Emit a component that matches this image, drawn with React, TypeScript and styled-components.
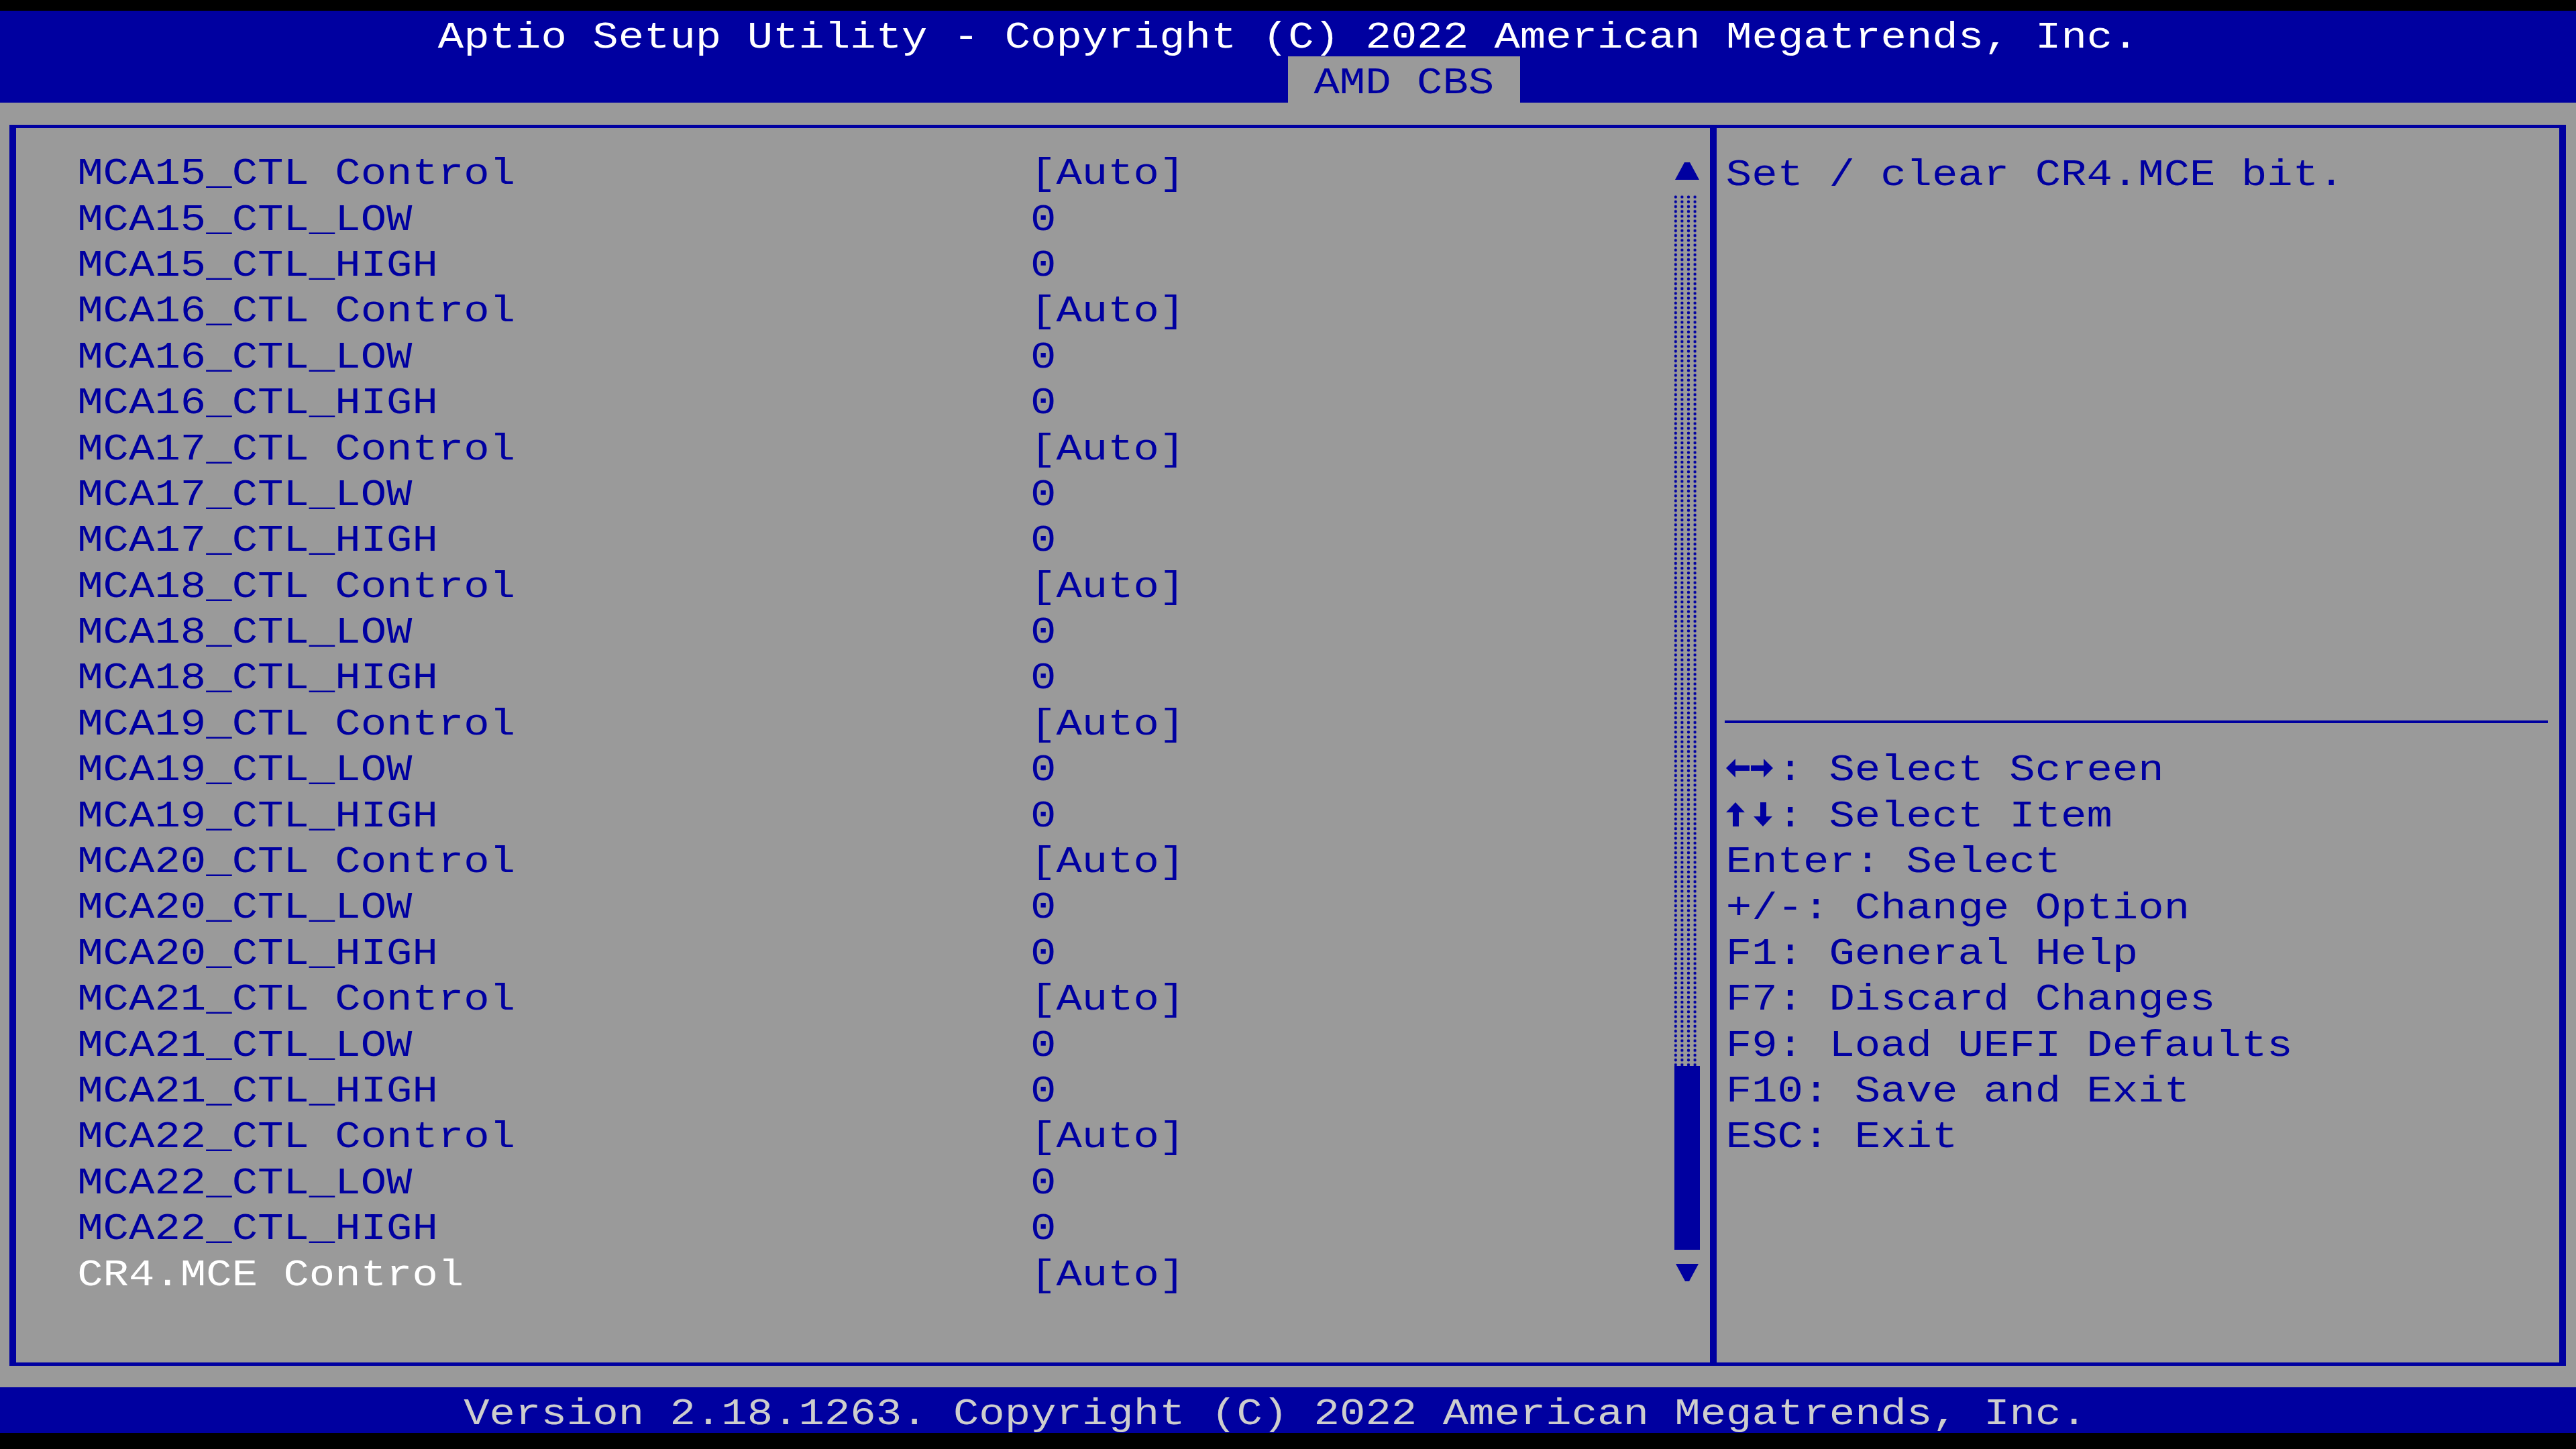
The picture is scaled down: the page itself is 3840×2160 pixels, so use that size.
import React from "react";
import styled, { createGlobalStyle } from "styled-components";

/* Text-mode metrics: 100 columns x 31 rows on a 3840x2160 screen */
const CW = 38.4;
const RH = 68.4;
const BLUE = "#0000a0";
const GRAY = "#9a9a9a";

const Global = createGlobalStyle`
  html, body {
    margin: 0;
    padding: 0;
    background: #000;
  }
  body {
    width: 3840px;
    height: 2160px;
    overflow: hidden;
  }
`;

const Screen = styled.div`
  width: 3840px;
  height: 2160px;
  box-sizing: border-box;
  padding-top: 16px;
  background: #000;
  display: flex;
  flex-direction: column;
  font-family: "Liberation Mono", "DejaVu Sans Mono", monospace;
  font-size: 64px;
`;

type Tone = "blue" | "white" | "dim";

const toneColor: Record<Tone, string> = {
  blue: BLUE,
  white: "#ffffff",
  dim: "#cdcdcd",
};

/* One run of characters, squeezed vertically to the console cell shape */
const Glyphs = styled.span<{ $tone: Tone }>`
  display: inline-block;
  height: ${RH}px;
  line-height: ${RH}px;
  white-space: pre;
  color: ${(p) => toneColor[p.$tone]};
  transform: scaleY(0.88);
  transform-origin: 0 100%;
`;

const Header = styled.header`
  background: ${BLUE};
  height: ${RH * 2}px;
  display: flex;
  flex-direction: column;
`;

const TitleRow = styled.div`
  height: ${RH}px;
  padding-left: ${CW * 17}px;
`;

const TabRow = styled.div`
  height: ${RH}px;
  padding-left: ${CW * 50}px;
`;

const Tab = styled.div`
  width: ${CW * 9}px;
  height: ${RH}px;
  box-sizing: border-box;
  padding-left: ${CW}px;
  background: ${GRAY};
`;

const Workspace = styled.main`
  height: ${RH * 28}px;
  box-sizing: border-box;
  background: ${GRAY};
  padding: 33.2px 0 32px 13.5px;
  display: flex;
  flex-direction: column;
`;

const Frame = styled.section`
  flex: 1;
  width: 3811.5px;
  box-sizing: border-box;
  border-style: solid;
  border-color: ${BLUE};
  border-width: 5px 10px;
  display: flex;
`;

const ListPanel = styled.div`
  width: 2472.5px;
  flex: none;
  box-sizing: border-box;
  padding: 30.2px 0 0 91.7px;
  display: flex;
  flex-direction: column;
`;

const SettingRow = styled.div`
  height: ${RH}px;
  display: grid;
  grid-template-columns: ${CW * 37}px auto;
`;

const ScrollRail = styled.div`
  width: ${CW}px;
  flex: none;
  padding-top: 30.2px;
  display: flex;
  flex-direction: column;
`;

const ArrowCell = styled.div`
  height: ${RH}px;
  display: flex;
  align-items: center;
  justify-content: center;
`;

const Track = styled.div<{ $rows: number }>`
  height: ${(p) => p.$rows * RH}px;
  background-image: radial-gradient(
    circle at center,
    ${BLUE} 0 1.9px,
    transparent 2.5px
  );
  background-size: 9.6px 7.2px;
  background-position: -3px 0;
  margin-right: 2px;
`;

const Thumb = styled.div<{ $rows: number }>`
  height: ${(p) => p.$rows * RH}px;
  background: ${BLUE};
`;

const HelpPanel = styled.aside`
  flex: 1;
  margin-left: 14.2px;
  border-left: 10px solid ${BLUE};
  box-sizing: border-box;
  padding: 30.2px 17px 0 14.2px;
  display: flex;
  flex-direction: column;
`;

const Description = styled.div`
  height: ${RH * 12}px;
`;

const Rule = styled.div`
  height: ${RH}px;
  display: flex;
  align-items: center;
  margin-left: -2px;

  &::before {
    content: "";
    flex: 1;
    height: 4px;
    background: ${BLUE};
  }
`;

const KeyRow = styled.div`
  height: ${RH}px;
  display: flex;
`;

const ArrowPair = styled.svg`
  flex: none;
  width: ${CW * 2}px;
  height: ${RH}px;
`;

const Footer = styled.footer`
  height: ${RH}px;
  background: ${BLUE};
  padding-left: ${CW * 18}px;
`;

const UpArrow = () => (
  <svg width="36" height="26" viewBox="0 0 36 26">
    <polygon points="14,0 22,0 36,26 0,26" fill={BLUE} />
  </svg>
);

const DownArrow = () => (
  <svg width="34" height="26" viewBox="0 0 34 26">
    <polygon points="0,0 34,0 20,26 14,26" fill={BLUE} />
  </svg>
);

/* The heavy console arrows used in the key legend: left/right or up/down */
const KeyArrows = ({ axis }: { axis: "x" | "y" }) => (
  <ArrowPair viewBox={`0 0 ${CW * 2} ${RH}`}>
    {axis === "x" ? (
      <g fill={BLUE}>
        <polygon points="0,35 14,21 14,49" />
        <rect x="13" y="31" width="22" height="8" />
        <rect x="37" y="31" width="20" height="8" />
        <polygon points="56,21 70,35 56,49" />
      </g>
    ) : (
      <g fill={BLUE}>
        <polygon points="14,17 28,32 0,32" />
        <rect x="10" y="31" width="9" height="22" />
        <rect x="51" y="17" width="9" height="22" />
        <polygon points="41,38 69,38 55,53" />
      </g>
    )}
  </ArrowPair>
);

type Setting = { label: string; value: string; selected?: boolean };

const settings: Setting[] = [];
for (let n = 15; n <= 22; n++) {
  settings.push({ label: `MCA${n}_CTL Control`, value: "[Auto]" });
  settings.push({ label: `MCA${n}_CTL_LOW`, value: "0" });
  settings.push({ label: `MCA${n}_CTL_HIGH`, value: "0" });
}
settings.push({ label: "CR4.MCE Control", value: "[Auto]", selected: true });

type HelpKey = { key: string; action: string; axis?: "x" | "y" };

const keys: HelpKey[] = [
  { key: "\u2190\u2192", action: ": Select Screen", axis: "x" },
  { key: "\u2191\u2193", action: ": Select Item", axis: "y" },
  { key: "Enter", action: ": Select" },
  { key: "+/-", action: ": Change Option" },
  { key: "F1", action: ": General Help" },
  { key: "F7", action: ": Discard Changes" },
  { key: "F9", action: ": Load UEFI Defaults" },
  { key: "F10", action: ": Save and Exit" },
  { key: "ESC", action: ": Exit" },
];

export default function App() {
  return (
    <>
      <Global />
      <Screen>
        <Header>
          <TitleRow>
            <Glyphs $tone="white">
              Aptio Setup Utility - Copyright (C) 2022 American Megatrends, Inc.
            </Glyphs>
          </TitleRow>
          <TabRow>
            <Tab>
              <Glyphs $tone="blue">AMD CBS</Glyphs>
            </Tab>
          </TabRow>
        </Header>

        <Workspace>
          <Frame>
            <ListPanel>
              {settings.map((s) => (
                <SettingRow key={s.label}>
                  <Glyphs $tone={s.selected ? "white" : "blue"}>{s.label}</Glyphs>
                  <Glyphs $tone="blue">{s.value}</Glyphs>
                </SettingRow>
              ))}
            </ListPanel>

            <ScrollRail>
              <ArrowCell>
                <UpArrow />
              </ArrowCell>
              <Track $rows={19} />
              <Thumb $rows={4} />
              <ArrowCell>
                <DownArrow />
              </ArrowCell>
            </ScrollRail>

            <HelpPanel>
              <Description>
                <Glyphs $tone="blue">Set / clear CR4.MCE bit.</Glyphs>
              </Description>
              <Rule />
              {keys.map((k) => (
                <KeyRow key={k.key}>
                  {k.axis ? (
                    <>
                      <KeyArrows axis={k.axis} />
                      <Glyphs $tone="blue">{k.action}</Glyphs>
                    </>
                  ) : (
                    <Glyphs $tone="blue">
                      {k.key}
                      {k.action}
                    </Glyphs>
                  )}
                </KeyRow>
              ))}
            </HelpPanel>
          </Frame>
        </Workspace>

        <Footer>
          <Glyphs $tone="dim">
            Version 2.18.1263. Copyright (C) 2022 American Megatrends, Inc.
          </Glyphs>
        </Footer>
      </Screen>
    </>
  );
}
